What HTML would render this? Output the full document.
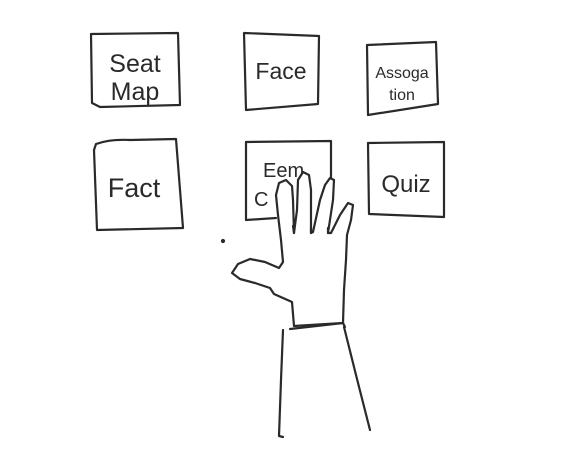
<!DOCTYPE html>
<html><head><style>
html,body{margin:0;padding:0;background:#fff;width:564px;height:463px;overflow:hidden}
svg{display:block}
text{font-family:"Liberation Sans",sans-serif;fill:#2a2a2a}
</style></head><body>
<svg width="564" height="463" viewBox="0 0 564 463" fill="none" stroke="#2a2a2a" stroke-width="2.2" stroke-linecap="round" stroke-linejoin="round">
<path d="M91 34 L178 33 L180 105 L100 107 L92 103 Z"/>
<path d="M244 33 L319 36 L318 104 L246 110 Z"/>
<path d="M367 45 L436 42 L438 104 L368 115 Z"/>
<path d="M96 144 Q110 139 130 140 L176 139 L183 228 L97 230 L94 150 Z"/>
<path d="M246 142 L331 141 L331 200"/>
<path d="M246 142 L246 220 L276 218"/>
<path d="M368 143 L444 142 L444 217 L369 214 Z"/>
<text x="135" y="72" font-size="25" text-anchor="middle" stroke="none">Seat</text>
<text x="135" y="100" font-size="25" text-anchor="middle" stroke="none">Map</text>
<text x="281" y="79" font-size="23" text-anchor="middle" stroke="none">Face</text>
<text x="402" y="78" font-size="16" text-anchor="middle" stroke="none">Assoga</text>
<text x="402" y="100" font-size="16" text-anchor="middle" stroke="none">tion</text>
<text x="134" y="197" font-size="27" text-anchor="middle" stroke="none">Fact</text>
<text x="263" y="177" font-size="20" stroke="none">Eem</text>
<text x="254" y="206" font-size="20" stroke="none">C</text>
<text x="406" y="192" font-size="24" text-anchor="middle" stroke="none">Quiz</text>
<path fill="#fff" d="M294 326 L292 302 L274 294 L270 288 L255 283 L240 279 L232 273 L238 264 L250 259 L265 262 L279 268 L283 262 L281 240 L278 215 L276 195 L279 183 L286 180 L292 186 L293 200 L294 233 L297 210 L298 180 L303 172 L309 175 L311 190 L311 233 L313 232 L320 200 L325 185 L330 178 L334 180 L333 200 L328 233 L331 233 L340 215 L348 203 L353 205 L351 220 L347 235 L346 260 L344 290 L343 323 Z"/>
<path d="M293 226 L294 233 M311 228 L311 233 M328 228 L328 233"/>
<path d="M290 329 L343 323 L345 327"/>
<path d="M283 330 L281 380 L279 436 L283 437"/>
<path d="M344 327 L356 375 L370 430"/>
<circle cx="223" cy="241" r="1" fill="#2a2a2a"/>
</svg>
</body></html>
